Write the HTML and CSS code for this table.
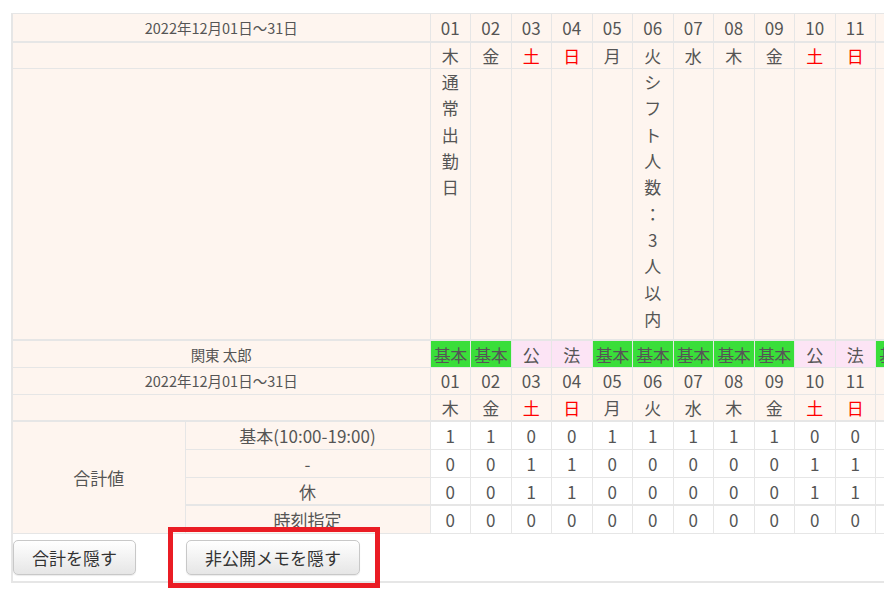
FILE: index.html
```html
<!DOCTYPE html>
<html lang="ja">
<head>
    <meta charset="utf-8">
    <title>シフト表</title>
    <link rel="stylesheet" href="styles.css">
</head>
<body>
    <div class="sheet">
        <div class="scroller">
            <table class="grid">
                <colgroup>
                    <col class="col-group">
                    <col class="col-sub">
                    <col class="col-day" span="12">
                </colgroup>

                <!-- 全体のヘッダー -->
                <tbody>
                    <tr class="first">
                        <th colspan="2" class="label small">2022年12月01日〜31日</th>
                        <td>01</td><td>02</td><td>03</td><td>04</td><td>05</td><td>06</td>
                        <td>07</td><td>08</td><td>09</td><td>10</td><td>11</td><td>12</td>
                    </tr>
                    <tr class="thick">
                        <th colspan="2" class="label"></th>
                        <td>木</td><td>金</td><td class="holiday">土</td><td class="holiday">日</td><td>月</td><td>火</td>
                        <td>水</td><td>木</td><td>金</td><td class="holiday">土</td><td class="holiday">日</td><td>月</td>
                    </tr>
                    <tr class="memo-row">
                        <th colspan="2" class="label"></th>
                        <td><span class="memo">通常出勤日</span></td>
                        <td></td><td></td><td></td><td></td>
                        <td><span class="memo">シフト人数：3人以内</span></td>
                        <td></td><td></td><td></td><td></td><td></td><td></td>
                    </tr>
                </tbody>

                <!-- スタッフ -->
                <tbody>
                    <tr class="thick">
                        <th colspan="2" class="label small">関東 太郎</th>
                        <td class="basic">基本</td><td class="basic">基本</td><td class="off">公</td><td class="off">法</td>
                        <td class="basic">基本</td><td class="basic">基本</td><td class="basic">基本</td><td class="basic">基本</td>
                        <td class="basic">基本</td><td class="off">公</td><td class="off">法</td><td class="basic">基本</td>
                    </tr>
                    <tr>
                        <th colspan="2" class="label small">2022年12月01日〜31日</th>
                        <td>01</td><td>02</td><td>03</td><td>04</td><td>05</td><td>06</td>
                        <td>07</td><td>08</td><td>09</td><td>10</td><td>11</td><td>12</td>
                    </tr>
                    <tr>
                        <th colspan="2" class="label"></th>
                        <td>木</td><td>金</td><td class="holiday">土</td><td class="holiday">日</td><td>月</td><td>火</td>
                        <td>水</td><td>木</td><td>金</td><td class="holiday">土</td><td class="holiday">日</td><td>月</td>
                    </tr>
                </tbody>

                <!-- 合計 -->
                <tbody class="total">
                    <tr class="thick">
                        <th rowspan="4" class="label">合計値</th>
                        <th class="label">基本(10:00-19:00)</th>
                        <td>1</td><td>1</td><td>0</td><td>0</td><td>1</td><td>1</td>
                        <td>1</td><td>1</td><td>1</td><td>0</td><td>0</td><td>1</td>
                    </tr>
                    <tr>
                        <th class="label">-</th>
                        <td>0</td><td>0</td><td>1</td><td>1</td><td>0</td><td>0</td>
                        <td>0</td><td>0</td><td>0</td><td>1</td><td>1</td><td>0</td>
                    </tr>
                    <tr>
                        <th class="label">休</th>
                        <td>0</td><td>0</td><td>1</td><td>1</td><td>0</td><td>0</td>
                        <td>0</td><td>0</td><td>0</td><td>1</td><td>1</td><td>0</td>
                    </tr>
                    <tr class="thick">
                        <th class="label">時刻指定</th>
                        <td>0</td><td>0</td><td>0</td><td>0</td><td>0</td><td>0</td>
                        <td>0</td><td>0</td><td>0</td><td>0</td><td>0</td><td>0</td>
                    </tr>
                </tbody>
            </table>
        </div>

        <div class="actions">
            <button class="btn">合計を隠す</button>
            <span class="marked">
                <button class="btn">非公開メモを隠す</button>
            </span>
        </div>
    </div>
</body>
</html>
```

FILE: styles.css
```css
body {
    margin: 0;
    background: #fff;
    color: #555;
    font-family: "Noto Sans CJK JP", "Noto Sans", sans-serif;
}

.sheet {
    margin: 13px 0 10px 11px;
    border-left: 2px solid #e6e6e6;
    border-bottom: 2px solid #e6e6e6;
}

.scroller {
    overflow: hidden;
}

.grid {
    border-collapse: collapse;
    table-layout: fixed;
    width: 903px;
    border-left: hidden;
    font-size: 17px;
}

.col-group {
    width: 172px;
}

.col-sub {
    width: 245px;
}

.col-day {
    width: 40.5px;
}

.grid tr {
    height: 27px;
}

.grid tr.first {
    height: 28px;
}

.grid th,
.grid td {
    border: 1px solid #e6e6e6;
    padding: 0;
    text-align: center;
    font-weight: normal;
    line-height: 25px;
    white-space: nowrap;
}

.grid td {
    background: #fef5ef;
}

.grid .label {
    background: #fef5ef;
}

.grid .small {
    font-size: 14.5px;
}

.grid tr.thick > * {
    border-top-width: 2px;
}

.holiday {
    color: #ff0000;
}

.grid td.basic {
    background: #3ade3a;
    letter-spacing: -0.5px;
}

.grid td.off {
    background: #fce4f5;
}

.memo-row td {
    vertical-align: top;
    padding-bottom: 7px;
}

.memo {
    display: block;
    width: 1em;
    margin: 0 auto;
    white-space: normal;
    word-break: break-all;
    line-break: anywhere;
    line-height: 1.55;
}

.grid .total tr {
    height: 28px;
}

.total td {
    background: #fff;
}

.actions {
    position: relative;
    display: flex;
    align-items: center;
    gap: 50px;
    padding: 6px 0;
}

.btn {
    height: 35px;
    padding: 0 18px;
    border: 1px solid #c8c8c8;
    border-radius: 5px;
    background: linear-gradient(#ffffff, #e6e6e6);
    box-shadow: 0 1px 1px rgba(0, 0, 0, 0.08);
    color: #333;
    font-family: inherit;
    font-size: 17px;
    cursor: pointer;
}

.marked {
    position: relative;
    display: flex;
    z-index: 1;
}

/* 赤枠の注釈 */
.marked::after {
    content: '';
    position: absolute;
    left: -18px;
    top: -13px;
    right: -20px;
    bottom: -13px;
    border: 5px solid #ea1c24;
    pointer-events: none;
}
```
